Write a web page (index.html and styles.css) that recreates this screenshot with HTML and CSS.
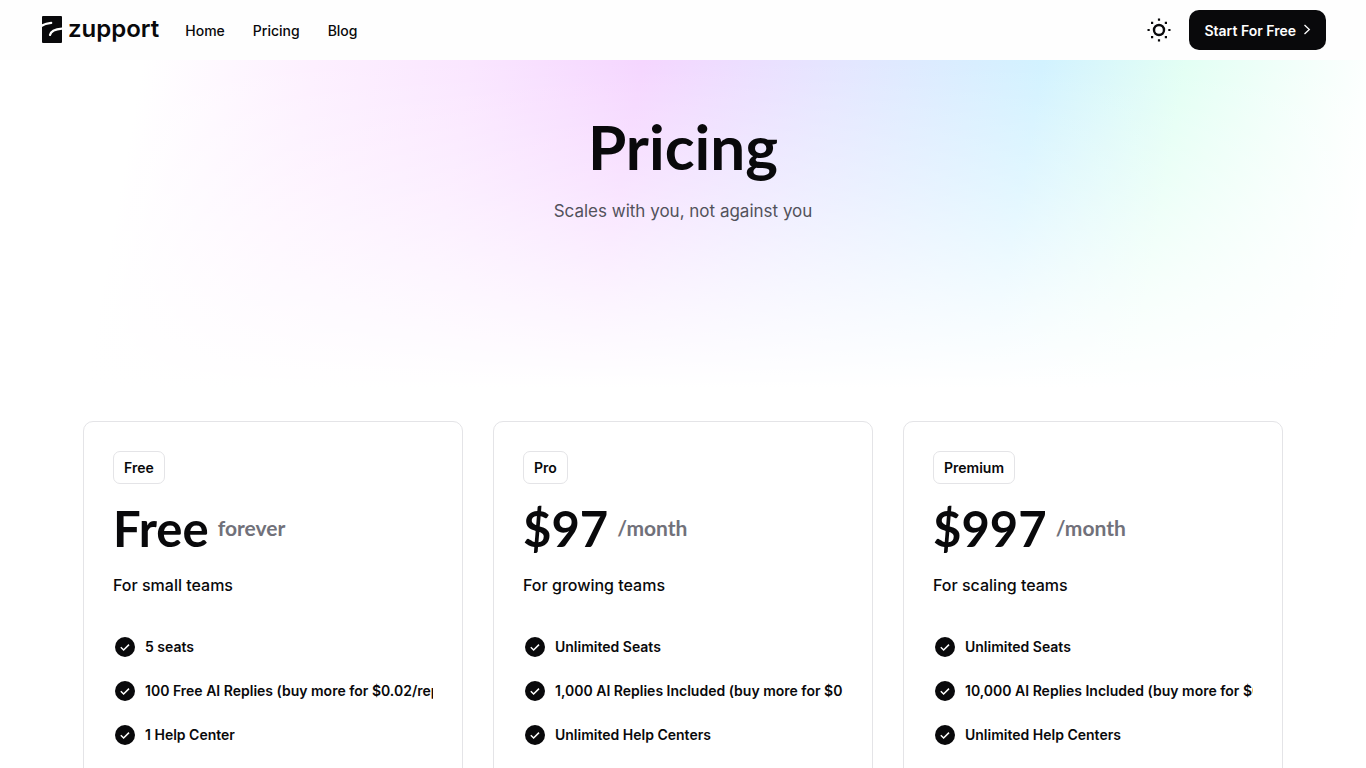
FILE: index.html
```html
<!DOCTYPE html>
<html lang="en">
<head>
	<meta charset="UTF-8">
	<meta name="viewport" content="width=device-width, initial-scale=1">
	<title>Pricing - zupport</title>
	<link rel="stylesheet" href="styles.css">
</head>
<body>
	<svg class="sprite" aria-hidden="true">
		<symbol id="check" viewBox="0 0 20 20">
			<circle cx="10" cy="10" r="10" fill="#09090b"/>
			<path d="M5.8 10.3l2.8 2.7 5.4-5.4" fill="none" stroke="#fff" stroke-width="1.5"/>
		</symbol>
	</svg>

	<header class="header">
		<a class="logo" href="#">
			<svg class="logo_mark" viewBox="0 0 20 27" aria-hidden="true">
				<rect width="20" height="27" rx="1" fill="#09090b"/>
				<path d="M-1 10.300C2 7.800 5 7.200 9.200 6.800M8 19C8.800 15 12 13.200 21 12.600" fill="none" stroke="#fff" stroke-width="2.200" stroke-linecap="round"/>
			</svg>
			<span>zupport</span>
		</a>
		<nav class="nav">
			<a href="#">Home</a>
			<a href="#">Pricing</a>
			<a href="#">Blog</a>
		</nav>
		<button type="button" class="theme_btn" aria-label="Toggle theme">
			<svg viewBox="0 0 24 24" width="24" height="24" fill="none" stroke="#09090b" stroke-width="2.400">
				<circle cx="12" cy="12" r="5"/>
				<path d="M12 .5v2.200M12 21.300v2.200M.5 12h2.200M21.300 12h2.200M4 4.900h2.200M17.800 4.900H20M4 19.100h2.200M17.800 19.100H20" stroke-width="2.200"/>
			</svg>
		</button>
		<a class="start_btn" href="#">
			Start For Free
			<svg viewBox="0 0 8 12" width="8" height="12" fill="none" stroke="#fff" stroke-width="1.300" aria-hidden="true"><path d="M1.500 1L6.300 5.500l-4.800 4.500"/></svg>
		</a>
	</header>

	<main>
		<section class="hero">
			<h1>Pricing</h1>
			<p>Scales with you, not against you</p>
		</section>

		<section class="plans">
			<article class="plan">
				<h2>Free</h2>
				<div class="price">Free <span>forever</span></div>
				<p>For small teams</p>
				<ul>
					<li><svg><use href="#check"/></svg><span>5 seats</span></li>
					<li><svg><use href="#check"/></svg><span>100 Free AI Replies (buy more for $0.02/reply)</span></li>
					<li><svg><use href="#check"/></svg><span>1 Help Center</span></li>
				</ul>
			</article>
			<article class="plan">
				<h2>Pro</h2>
				<div class="price">$97 <span>/month</span></div>
				<p>For growing teams</p>
				<ul>
					<li><svg><use href="#check"/></svg><span>Unlimited Seats</span></li>
					<li><svg><use href="#check"/></svg><span>1,000 AI Replies Included (buy more for $0.02/reply)</span></li>
					<li><svg><use href="#check"/></svg><span>Unlimited Help Centers</span></li>
				</ul>
			</article>
			<article class="plan">
				<h2>Premium</h2>
				<div class="price">$997 <span>/month</span></div>
				<p>For scaling teams</p>
				<ul>
					<li><svg><use href="#check"/></svg><span>Unlimited Seats</span></li>
					<li><svg><use href="#check"/></svg><span>10,000 AI Replies Included (buy more for $0.02/reply)</span></li>
					<li><svg><use href="#check"/></svg><span>Unlimited Help Centers</span></li>
				</ul>
			</article>
		</section>
	</main>
</body>
</html>
```

FILE: styles.css
```css
*{
	margin: 0;
	padding: 0;
	box-sizing: border-box;
}
body{
	font-family: Inter, sans-serif;
	font-size: 14px;
	color: #09090b;
	background-color: #fff;
	overflow-x: hidden;
}
a{
	color: inherit;
	text-decoration: none;
}
.sprite{
	display: none;
}

/* header */
.header{
	height: 60px;
	padding: 0 40px;
	display: flex;
	align-items: center;
	background-color: #fefefe;
}
.logo{
	display: flex;
	align-items: center;
	gap: 6px;
	padding: 0 0 2px 2px;
	font-size: 24px;
	line-height: 28px;
	font-weight: 600;
}
.logo_mark{
	width: 20px;
	height: 27px;
}
.nav{
	display: flex;
	gap: 28px;
	margin-left: 26px;
	margin-right: auto;
	padding-top: 2px;
	font-weight: 500;
	line-height: 20px;
}
.theme_btn{
	width: 24px;
	height: 24px;
	margin-right: 18px;
	border: none;
	background: none;
	cursor: pointer;
}
.start_btn{
	height: 40px;
	padding: 0 15px;
	display: flex;
	align-items: center;
	gap: 7px;
	border-radius: 10px;
	background-color: #09090b;
	color: #fff;
	font-weight: 600;
}

/* hero */
.hero{
	height: 361px;
	padding-top: 50px;
	text-align: center;
	background:
		linear-gradient(to bottom, rgba(255,255,255,0) 0%, rgba(255,255,255,.35) 35%, rgba(255,255,255,.75) 68%, #fff 91%),
		linear-gradient(100deg, #fff 10%, #fdf0ff 22%, #fae6ff 33%, #f5d6ff 45%, #e4e6ff 59%, #d2f2ff 73%, #e3fff4 83%, #fff 97%);
}
.hero h1{
	font-family: Lato, sans-serif;
	font-size: 62px;
	line-height: 72px;
	font-weight: 700;
}
.hero p{
	margin-top: 16px;
	font-size: 17px;
	line-height: 26px;
	color: #52525b;
}

/* plans */
.plans{
	max-width: 1200px;
	margin: 0 auto;
	display: grid;
	grid-template-columns: repeat(3, minmax(0, 1fr));
	gap: 30px;
}
.plan{
	padding: 29px;
	border: 1px solid #e4e4e7;
	border-radius: 10px;
	background-color: #fff;
}
.plan h2{
	width: fit-content;
	padding: 6px 10px;
	border: 1px solid #e4e4e7;
	border-radius: 7px;
	font-size: 14px;
	line-height: 19px;
	font-weight: 600;
}
.price{
	display: flex;
	align-items: center;
	gap: 9px;
	margin-top: 14px;
	font-family: Lato, sans-serif;
	font-size: 49px;
	line-height: 60px;
	font-weight: 700;
}
.price span{
	font-size: 21px;
	color: #71717a;
}
.plan p{
	margin-top: 15px;
	font-size: 16px;
	line-height: 24px;
	font-weight: 500;
}
.plan ul{
	margin-top: 40px;
	list-style: none;
}
.plan li{
	display: flex;
	align-items: center;
	gap: 10px;
	margin-bottom: 24px;
	padding-left: 2px;
	line-height: 20px;
	font-weight: 600;
}
.plan li svg{
	flex: none;
	width: 20px;
	height: 20px;
}
/* long features are clipped at the card padding */
.plan li span{
	overflow: hidden;
	white-space: nowrap;
}
```
